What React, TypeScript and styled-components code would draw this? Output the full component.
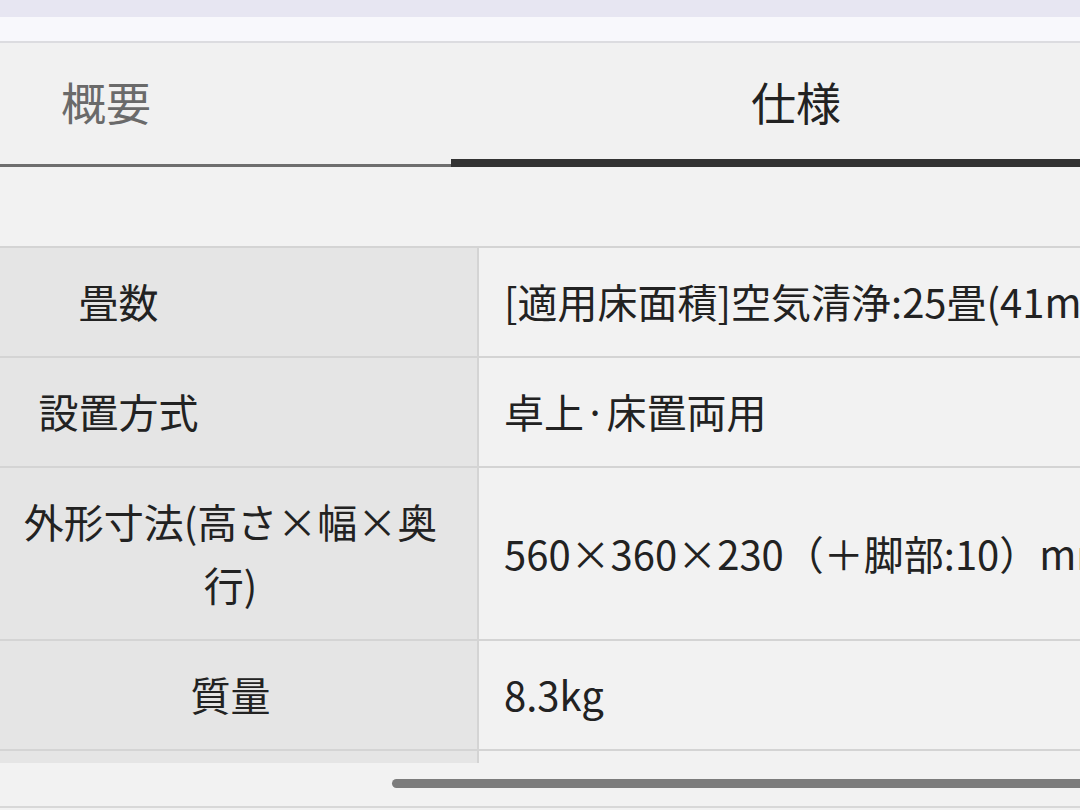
import React from "react";
import styled, { createGlobalStyle } from "styled-components";

const GlobalStyle = createGlobalStyle`
  html, body {
    margin: 0;
    padding: 0;
    background: #f2f2f2;
    overflow: hidden;
    font-family: "Noto Sans CJK JP", "Noto Sans", sans-serif;
    color: #222;
  }
  * { box-sizing: border-box; }
`;

const Page = styled.div`
  width: 1080px;
  height: 810px;
  overflow: hidden;
  display: flex;
  flex-direction: column;
  background: #f2f2f2;
`;

const StatusBand = styled.div`
  height: 17px;
  flex: none;
  background: #e7e6f2;
`;

const SubBand = styled.div`
  height: 26px;
  flex: none;
  background: #f8f8fc;
  border-bottom: 2px solid #dcdce0;
`;

const TabBar = styled.div`
  display: flex;
  flex: none;
  margin-left: -239px;
  width: 1380px;
  background: #f1f1f1;
`;

const Tab = styled.div<{ $active?: boolean }>`
  width: 690px;
  height: 124px;
  display: flex;
  align-items: center;
  justify-content: center;
  padding-bottom: 8px;
  font-size: 45px;
  color: ${(p) => (p.$active ? "#222" : "#6a6a6a")};
  box-shadow: ${(p) => (p.$active ? "inset 0 -8px 0 #333" : "inset 0 -3px 0 #6e6e6e")};
`;

const Spacer = styled.div`
  height: 79px;
  flex: none;
`;

const ScrollArea = styled.div`
  height: 517px;
  flex: none;
  overflow: hidden;
`;

const Table = styled.table`
  border-collapse: collapse;
  border-top: 2px solid #d4d4d4;
  font-size: 40px;
  line-height: 63px;
`;

const Row = styled.tr`
  border-bottom: 2px solid #d4d4d4;
`;

const HeadCell = styled.th<{ $shiftLeft?: boolean }>`
  width: 478px;
  min-width: 478px;
  background: #e5e5e5;
  border-right: 2px solid #d4d4d4;
  font-weight: 400;
  text-align: center;
  vertical-align: middle;
  padding-top: 22px;
  padding-bottom: 23px;
  padding-left: ${(p) => (p.$shiftLeft ? "0" : "12px")};
  padding-right: ${(p) => (p.$shiftLeft ? "240px" : "28px")};
`;

const DataCell = styled.td`
  background: #f2f2f2;
  white-space: nowrap;
  vertical-align: middle;
  padding: 22px 40px 23px 25px;
  min-width: 900px;
`;

const ScrollTrack = styled.div`
  flex: none;
  height: 45px;
  display: flex;
  align-items: center;
  padding-left: 392px;
  padding-bottom: 2px;
  border-bottom: 2px solid #d8d8d8;
`;

const Thumb = styled.div`
  height: 9px;
  width: 760px;
  border-radius: 5px;
  background: #7c7c7c;
  flex: none;
`;

const rows = [
  { label: "畳数", value: "[適用床面積]空気清浄:25畳(41m²)", shift: true },
  { label: "設置方式", value: "卓上·床置両用", shift: true },
  { label: "外形寸法(高さ×幅×奥行)", value: "560×360×230（＋脚部:10）mm", shift: false },
  { label: "質量", value: "8.3kg", shift: false },
  { label: "電源", value: "AC100V 50/60Hz", shift: false },
];

export default function App() {
  return (
    <>
      <GlobalStyle />
      <Page>
        <StatusBand />
        <SubBand />
        <TabBar>
          <Tab>概要</Tab>
          <Tab $active>仕様</Tab>
        </TabBar>
        <Spacer />
        <ScrollArea>
          <Table>
            <tbody>
              {rows.map((r) => (
                <Row key={r.label}>
                  <HeadCell $shiftLeft={r.shift}>{r.label}</HeadCell>
                  <DataCell>{r.value}</DataCell>
                </Row>
              ))}
            </tbody>
          </Table>
        </ScrollArea>
        <ScrollTrack>
          <Thumb />
        </ScrollTrack>
      </Page>
    </>
  );
}
